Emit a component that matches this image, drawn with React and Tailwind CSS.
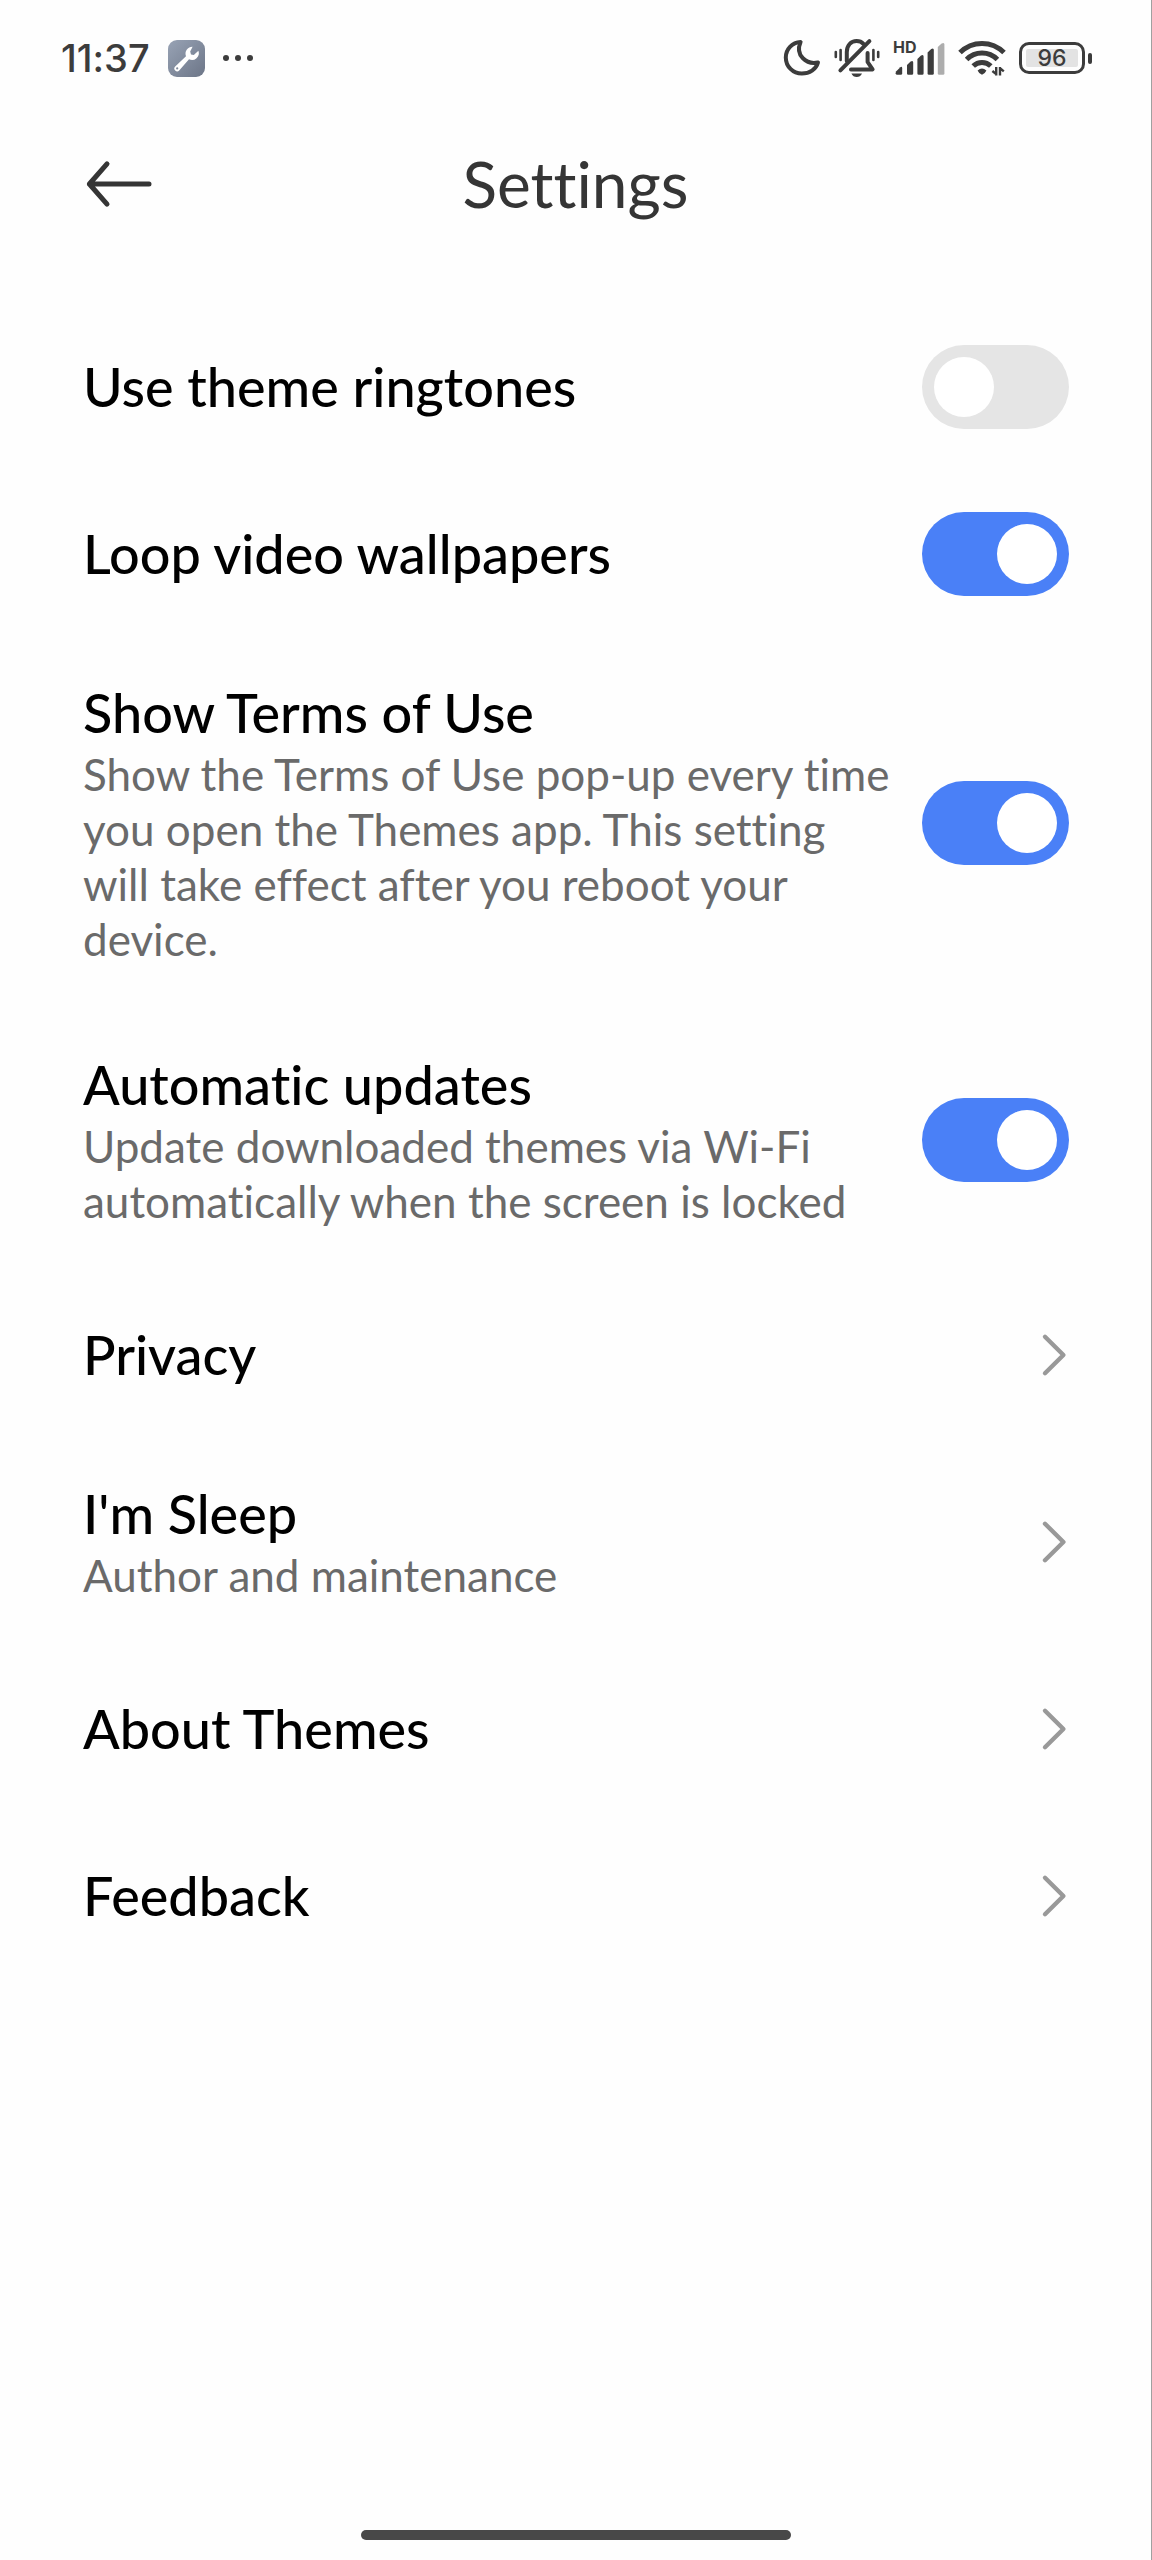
import React, { useState } from "react";

const SETTINGS = [
  { id: "ringtones", title: "Use theme ringtones", type: "switch", on: false },
  { id: "loop", title: "Loop video wallpapers", type: "switch", on: true },
  {
    id: "terms",
    title: "Show Terms of Use",
    text: "Show the Terms of Use pop-up every time you open the Themes app. This setting will take effect after you reboot your device.",
    type: "switch",
    on: true,
  },
  {
    id: "updates",
    title: "Automatic updates",
    text: "Update downloaded themes via Wi-Fi automatically when the screen is locked",
    type: "switch",
    on: true,
  },
  { id: "privacy", title: "Privacy", type: "link" },
  { id: "author", title: "I'm Sleep", text: "Author and maintenance", type: "link" },
  { id: "about", title: "About Themes", type: "link" },
  { id: "feedback", title: "Feedback", type: "link" },
];

const ToolIcon = () => (
  <svg width="37" height="37" viewBox="0 0 37 37" aria-hidden="true">
    <defs>
      <linearGradient id="tool" x1="0" y1="0" x2="1" y2="1">
        <stop offset="0" stopColor="#98a3b5" />
        <stop offset="1" stopColor="#6c7587" />
      </linearGradient>
    </defs>
    <rect width="37" height="37" rx="9" fill="url(#tool)" />
    <path
      d="M24.6 6.8a6.8 6.8 0 0 0-6.6 9.4L7.2 26.4a2.8 2.8 0 0 0 4 4l9.8-11.2A6.8 6.8 0 0 0 30.4 10.8l-4.6 4.3-2.8-.7-.8-2.9z"
      fill="#fff"
    />
    <circle cx="9.2" cy="28.4" r="1.1" fill="#7f899b" />
  </svg>
);

const MoonIcon = () => (
  <svg width="38" height="38" viewBox="0 0 38 38" fill="none" stroke="#3c3c3c" strokeWidth="4" strokeLinejoin="round" aria-hidden="true">
    <path d="M17.6 3C9 3.4 2.8 10.2 2.8 18.4C2.8 27.4 10 34.6 18.8 34.6C26.6 34.6 33 30.4 35 23.4C24 26 11.6 16.6 17.6 3Z" />
  </svg>
);

const MutedIcon = () => (
  <svg width="46" height="40" viewBox="0 0 46 40" fill="none" stroke="#3c3c3c" strokeLinecap="round" strokeLinejoin="round" aria-hidden="true">
    <path d="M1.8 14v5M6.6 12v10M39.4 12v10M44.2 14v5" strokeWidth="2.6" />
    <path d="M12.8 23V14C12.8 7.4 17 3 22.6 3C25.4 3 27.8 4 29.4 5.8M33.6 15v9l5 7.4H17" strokeWidth="4" />
    <path d="M6.4 32.4L35.4 3.2" strokeWidth="4" />
    <path d="M17.4 35.4h10.6c-1 2.2-3 3.6-5.3 3.6s-4.3-1.4-5.3-3.6z" fill="#3c3c3c" stroke="none" />
  </svg>
);

const SignalIcon = () => (
  <svg width="52" height="48" viewBox="0 -6 52 48" fill="#3c3c3c" aria-hidden="true">
    <text x="0" y="13" fontSize="16" fontWeight="700" fontFamily="Inter, sans-serif">
      HD
    </text>
    <path d="M3 31.4l4.4-4.2q1.8-1 1.8 1v5.2q0 1.4-1.4 1.4H4.2q-1.4 0-1.6-1.4z" />
    <path d="M14 25l3.6-3.4q2.6-1.4 2.6 1v10.8q0 1.4-1.4 1.4h-3.4q-1.4 0-1.4-1.4z" />
    <path d="M24.4 19l3.6-3.4q2.6-1.4 2.6 1v16.8q0 1.4-1.4 1.4h-3.4q-1.4 0-1.4-1.4z" />
    <path d="M34.6 12.4l3.6-3.4q2.6-1.4 2.6 1v23.4q0 1.4-1.4 1.4H36q-1.4 0-1.4-1.4z" />
    <path d="M44.8 7l3.8-3.6q2.8-1.4 2.8 1v29q0 1.4-1.4 1.4h-3.8q-1.4 0-1.4-1.4z" fill="#adadad" />
  </svg>
);

const WifiIcon = () => (
  <svg width="48" height="36" viewBox="0 0 48 36" fill="none" stroke="#3c3c3c" aria-hidden="true">
    <path d="M2 12.6A31 31 0 0 1 46 12.6" strokeWidth="5" />
    <path d="M8.6 19.4A21.6 21.6 0 0 1 39.4 19.4" strokeWidth="5" />
    <path d="M15.2 26A12.6 12.6 0 0 1 32.8 26" strokeWidth="5" />
    <path d="M19.6 30.4q4.4-3.6 8.8 0q-1.6 3.6-4.4 4.4q-2.8-.8-4.4-4.4z" fill="#3c3c3c" stroke="none" />
    <path d="M38.2 27v8.4M42 35.4V27M34.4 31l3.8 3.2M42 28.2l3.8 3.2" strokeWidth="2.4" />
  </svg>
);

const StatusBar = () => (
  <div className="flex h-[116px] items-center justify-between pr-[59px] pl-[61px] font-['Inter',sans-serif] font-medium text-[#3c3c3c]">
    <div className="flex items-center gap-[18px]">
      <span className="text-[38px] leading-10">11:37</span>
      <ToolIcon />
      <div className="flex gap-[6px]">
        <i className="size-[6px] rounded-full bg-[#3c3c3c]" />
        <i className="size-[6px] rounded-full bg-[#3c3c3c]" />
        <i className="size-[6px] rounded-full bg-[#3c3c3c]" />
      </div>
    </div>
    <div className="flex items-center gap-[13px]">
      <MoonIcon />
      <MutedIcon />
      <SignalIcon />
      <WifiIcon />
      <div className="flex items-center gap-[3px]">
        <div className="h-8 w-[66px] rounded-[10px] border-[3px] border-[#3c3c3c] p-1">
          <div className="flex h-full items-center justify-center rounded-xs bg-[#e3e3e3] text-[23px] leading-none">
            96
          </div>
        </div>
        <i className="h-[11px] w-1 rounded-xs bg-[#3c3c3c]" />
      </div>
    </div>
  </div>
);

const Header = () => (
  <header className="grid h-[136px] grid-cols-[1fr_auto_1fr] items-center px-[83px]">
    <button type="button" aria-label="Back" className="justify-self-start">
      <svg width="70" height="50" viewBox="0 0 70 50" fill="none" stroke="#353535" strokeWidth="5" strokeLinecap="round" strokeLinejoin="round" aria-hidden="true">
        <path d="M24 4.8L6.4 25L24 45.2M6.4 25H66" />
      </svg>
    </button>
    <h1 className="text-[64px] leading-[72px] text-[#353535]">Settings</h1>
  </header>
);

const Label = ({ title, text }) => (
  <span className="flex flex-1 flex-col">
    <span className="text-[54px] leading-[68px] font-medium text-black">{title}</span>
    {text && <span className="text-[44px] leading-[55px] text-[#6a6a6a]">{text}</span>}
  </span>
);

const SwitchRow = ({ item }) => {
  const [on, setOn] = useState(item.on);

  return (
    <label htmlFor={item.id} className="flex min-h-[167px] items-center gap-6 py-[42px]">
      <Label title={item.title} text={item.text} />
      <input
        id={item.id}
        type="checkbox"
        role="switch"
        checked={on}
        onChange={(e) => setOn(e.target.checked)}
        className="-my-1 h-[84px] w-[147px] shrink-0 appearance-none rounded-full bg-[#e5e5e5] p-3 before:block before:size-[60px] before:rounded-full before:bg-white before:content-[''] checked:bg-[#4a80f7] checked:before:translate-x-[63px]"
      />
    </label>
  );
};

const LinkRow = ({ item }) => (
  <a href={`#${item.id}`} className="flex min-h-[167px] items-center gap-6 py-[42px]">
    <Label title={item.title} text={item.text} />
    <svg width="29" height="44" viewBox="0 0 29 44" fill="none" stroke="#999" strokeWidth="4.4" strokeLinecap="round" strokeLinejoin="round" aria-hidden="true">
      <path d="M5 3.8L23.4 22L5 40.2" />
    </svg>
  </a>
);

const App = () => {
  return (
    <div className="flex min-h-screen flex-col border-r border-[#a0a0a0] bg-[#fefefe] font-['Lato',sans-serif] [font-variant-ligatures:none]">
      <StatusBar />
      <Header />
      <main className="mt-[51px] pr-[82px] pl-[83px]">
        {SETTINGS.map((item) =>
          item.type === "switch" ? (
            <SwitchRow key={item.id} item={item} />
          ) : (
            <LinkRow key={item.id} item={item} />
          )
        )}
      </main>
      <div className="mx-auto mt-auto mb-5 h-[10px] w-[430px] rounded-full bg-[#484848]" />
    </div>
  );
};

export default App;
